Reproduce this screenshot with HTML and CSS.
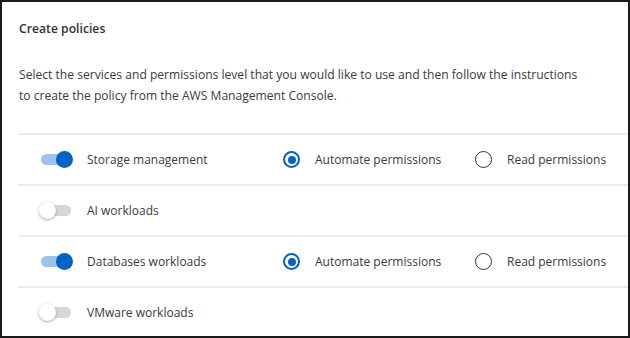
FILE: index.html
```html
<!DOCTYPE html>
<html>
<head>
<meta charset="utf-8">
<link rel="stylesheet" href="styles.css">
</head>
<body>
<div class="panel">
  <h2 class="title">Create policies</h2>
  <p class="desc">Select the services and permissions level that you would like to use and then follow the instructions to create the policy from the AWS Management Console.</p>
  <div class="list">
    <div class="row">
      <span class="toggle on"><span class="track"></span><span class="thumb"></span></span>
      <span class="label">Storage management</span>
      <span class="radio-item"><span class="radio checked"></span>Automate permissions</span>
      <span class="radio-item"><span class="radio"></span>Read permissions</span>
    </div>
    <div class="row">
      <span class="toggle"><span class="track"></span><span class="thumb"></span></span>
      <span class="label">AI workloads</span>
    </div>
    <div class="row">
      <span class="toggle on"><span class="track"></span><span class="thumb"></span></span>
      <span class="label">Databases workloads</span>
      <span class="radio-item"><span class="radio checked"></span>Automate permissions</span>
      <span class="radio-item"><span class="radio"></span>Read permissions</span>
    </div>
    <div class="row">
      <span class="toggle"><span class="track"></span><span class="thumb"></span></span>
      <span class="label">VMware workloads</span>
    </div>
  </div>
</div>
</body>
</html>
```
FILE: styles.css
```css
* { box-sizing: border-box; }
html, body { margin: 0; padding: 0; background: #fff; }
body {
  font-family: "Open Sans", "Noto Sans", sans-serif;
  color: #3b3a39;
}
.panel {
  width: 630px;
  height: 338px;
  border: 2px solid #1b1b1b;
  padding: 0 0 0 17px;
  overflow: hidden;
}
.title {
  margin: 0;
  padding-top: 18px;
  font-size: 12.2px;
  line-height: 18px;
  font-weight: 600;
  color: #323130;
}
.desc {
  margin: 0;
  padding-top: 26px;
  font-size: 12.1px;
  line-height: 21px;
  width: 568px;
}
.list {
  margin-top: 27px;
  margin-left: -1px;
}
.row {
  display: grid;
  grid-template-columns: 48px 196px 192px auto;
  align-items: center;
  height: 51px;
  padding-left: 21px;
  border-top: 2px solid #ececec;
  font-size: 12px;
}
.toggle {
  position: relative;
  width: 34px;
  height: 17px;
}
.track {
  position: absolute;
  left: 2px;
  right: 2px;
  top: 3px;
  height: 11px;
  border-radius: 6px;
  background: #d6d6d6;
}
.thumb {
  position: absolute;
  left: 0;
  top: 0;
  width: 17px;
  height: 17px;
  border-radius: 50%;
  background: #fff;
  box-shadow: 0 1px 3px rgba(0,0,0,0.35);
}
.toggle.on .track { background: #9cc3ec; }
.toggle.on .thumb {
  left: auto;
  right: 0;
  background: #0063c5;
  box-shadow: none;
}
.radio-item {
  display: flex;
  align-items: center;
  gap: 15px;
}
.radio {
  width: 17px;
  height: 17px;
  border: 1.5px solid #323130;
  border-radius: 50%;
  display: flex;
  align-items: center;
  justify-content: center;
}
.radio.checked {
  border: 2px solid #0063c5;
}
.radio.checked::after {
  content: "";
  width: 8px;
  height: 8px;
  border-radius: 50%;
  background: #0063c5;
}
```
